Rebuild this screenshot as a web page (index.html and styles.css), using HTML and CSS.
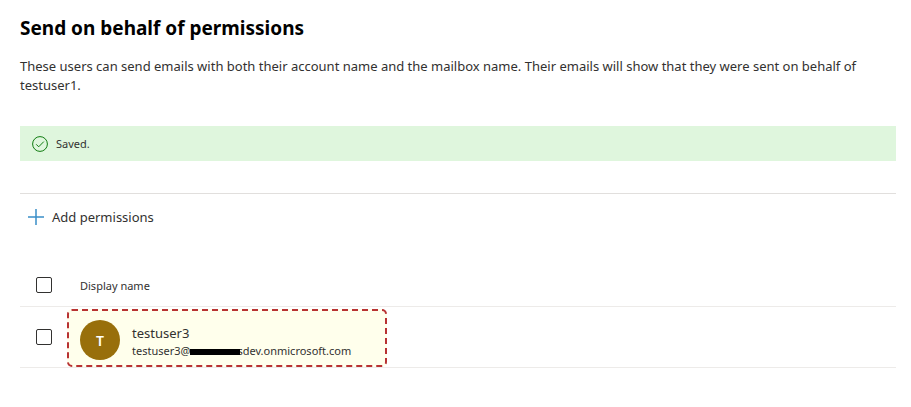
FILE: index.html
```
<!DOCTYPE html>
<html lang="en">
<head>
    <meta charset="UTF-8">
    <meta name="viewport" content="width=device-width, initial-scale=1.0">
    <title>Send on behalf of permissions</title>
    <link rel="stylesheet" href="styles.css">
</head>
<body>
    <main class="panel">
        <h1>Send on behalf of permissions</h1>
        <p class="description">These users can send emails with both their account name and the mailbox name. Their emails will show that they were sent on behalf of testuser1.</p>

        <div class="message" role="status">
            <svg class="message-icon" viewBox="0 0 16 16" aria-hidden="true">
                <circle cx="8" cy="8" r="7.4"/>
                <path d="M4.2 8.3l2.5 2.5 5.1-5.2"/>
            </svg>
            <span>Saved.</span>
        </div>

        <div class="toolbar">
            <button type="button" class="add-button">
                <svg class="add-icon" viewBox="0 0 16 16" aria-hidden="true">
                    <path d="M8 0v16M0 8h16"/>
                </svg>
                <span>Add permissions</span>
            </button>
        </div>

        <table class="users">
            <thead>
                <tr>
                    <th class="check-cell"><input type="checkbox" aria-label="Select all users"></th>
                    <th class="name-cell" scope="col">Display name</th>
                </tr>
            </thead>
            <tbody>
                <tr>
                    <td class="check-cell"><input type="checkbox" aria-label="Select testuser3"></td>
                    <td class="user-cell">
                        <div class="user">
                            <span class="avatar">T</span>
                            <div class="user-text">
                                <div class="user-name">testuser3</div>
                                <div class="user-mail">testuser3@<span class="redacted"></span>sdev.onmicrosoft.com</div>
                            </div>
                        </div>
                    </td>
                </tr>
            </tbody>
        </table>
    </main>
</body>
</html>
```
FILE: styles.css
```
body {
	font-family: "Noto Sans", "Open Sans", sans-serif;
	font-size: 13px;
	margin: 0;
	color: #323130;
	background-color: #fff;
}

.panel {
	padding: 14px 15px 20px 20px;
}

h1 {
	margin: 0;
	font-size: 19px;
	line-height: 28px;
	font-weight: 700;
	color: #000;
}

.description {
	margin: 15px 0 0;
	line-height: 19px;
}

.message {
	display: flex;
	align-items: center;
	gap: 8px;
	margin-top: 31px;
	padding: 0 12px;
	height: 35px;
	font-size: 11px;
	background: #dff6dd;
}

.message-icon {
	width: 16px;
	height: 16px;
	fill: none;
	stroke: #107c10;
}

.toolbar {
	margin-top: 32px;
	padding: 3px 0;
	border-top: 1px solid #e1dfdd;
}

.add-button {
	display: flex;
	align-items: center;
	gap: 8px;
	height: 40px;
	padding: 0 8px;
	border: 0;
	background: none;
	font: inherit;
	color: inherit;
}

.add-icon {
	width: 16px;
	height: 16px;
	fill: none;
	stroke: #3a8fc8;
	stroke-width: 1.5;
}

.users {
	width: 100%;
	margin-top: 24px;
	border-collapse: collapse;
}

.users tr {
	border-bottom: 1px solid #edebe9;
}

.users th {
	height: 42px;
	padding: 0;
	text-align: left;
	font-size: 11px;
	font-weight: 400;
}

.users td {
	height: 60px;
	padding: 0;
}

.users .check-cell {
	width: 47px;
	padding-left: 16px;
	box-sizing: border-box;
}

.users .name-cell {
	padding-left: 13px;
}

.users .user-cell {
	vertical-align: bottom;
}

input[type="checkbox"] {
	appearance: none;
	display: block;
	width: 16px;
	height: 16px;
	margin: 0;
	border: 1px solid #323130;
	border-radius: 2px;
	background: #fff;
}

.user {
	display: flex;
	align-items: center;
	gap: 12px;
	width: 320px;
	height: 58px;
	padding: 4px 11px 0;
	box-sizing: border-box;
	border: 2px dashed #b83232;
	border-radius: 5px;
	background: #ffffec;
}

.avatar {
	display: flex;
	align-items: center;
	justify-content: center;
	width: 40px;
	height: 40px;
	border-radius: 50%;
	font-size: 14px;
	font-weight: 600;
	color: #fff;
	background: #986f0b;
}

.user-text {
	padding-top: 2px;
}

.user-name {
	line-height: 20px;
}

.user-mail {
	font-size: 11px;
	line-height: 16px;
}

/* bar lies over the letters next to it */
.redacted {
	display: inline-block;
	position: relative;
	width: 50px;
	height: 6px;
	margin-right: -3px;
	background: #000;
}
```
